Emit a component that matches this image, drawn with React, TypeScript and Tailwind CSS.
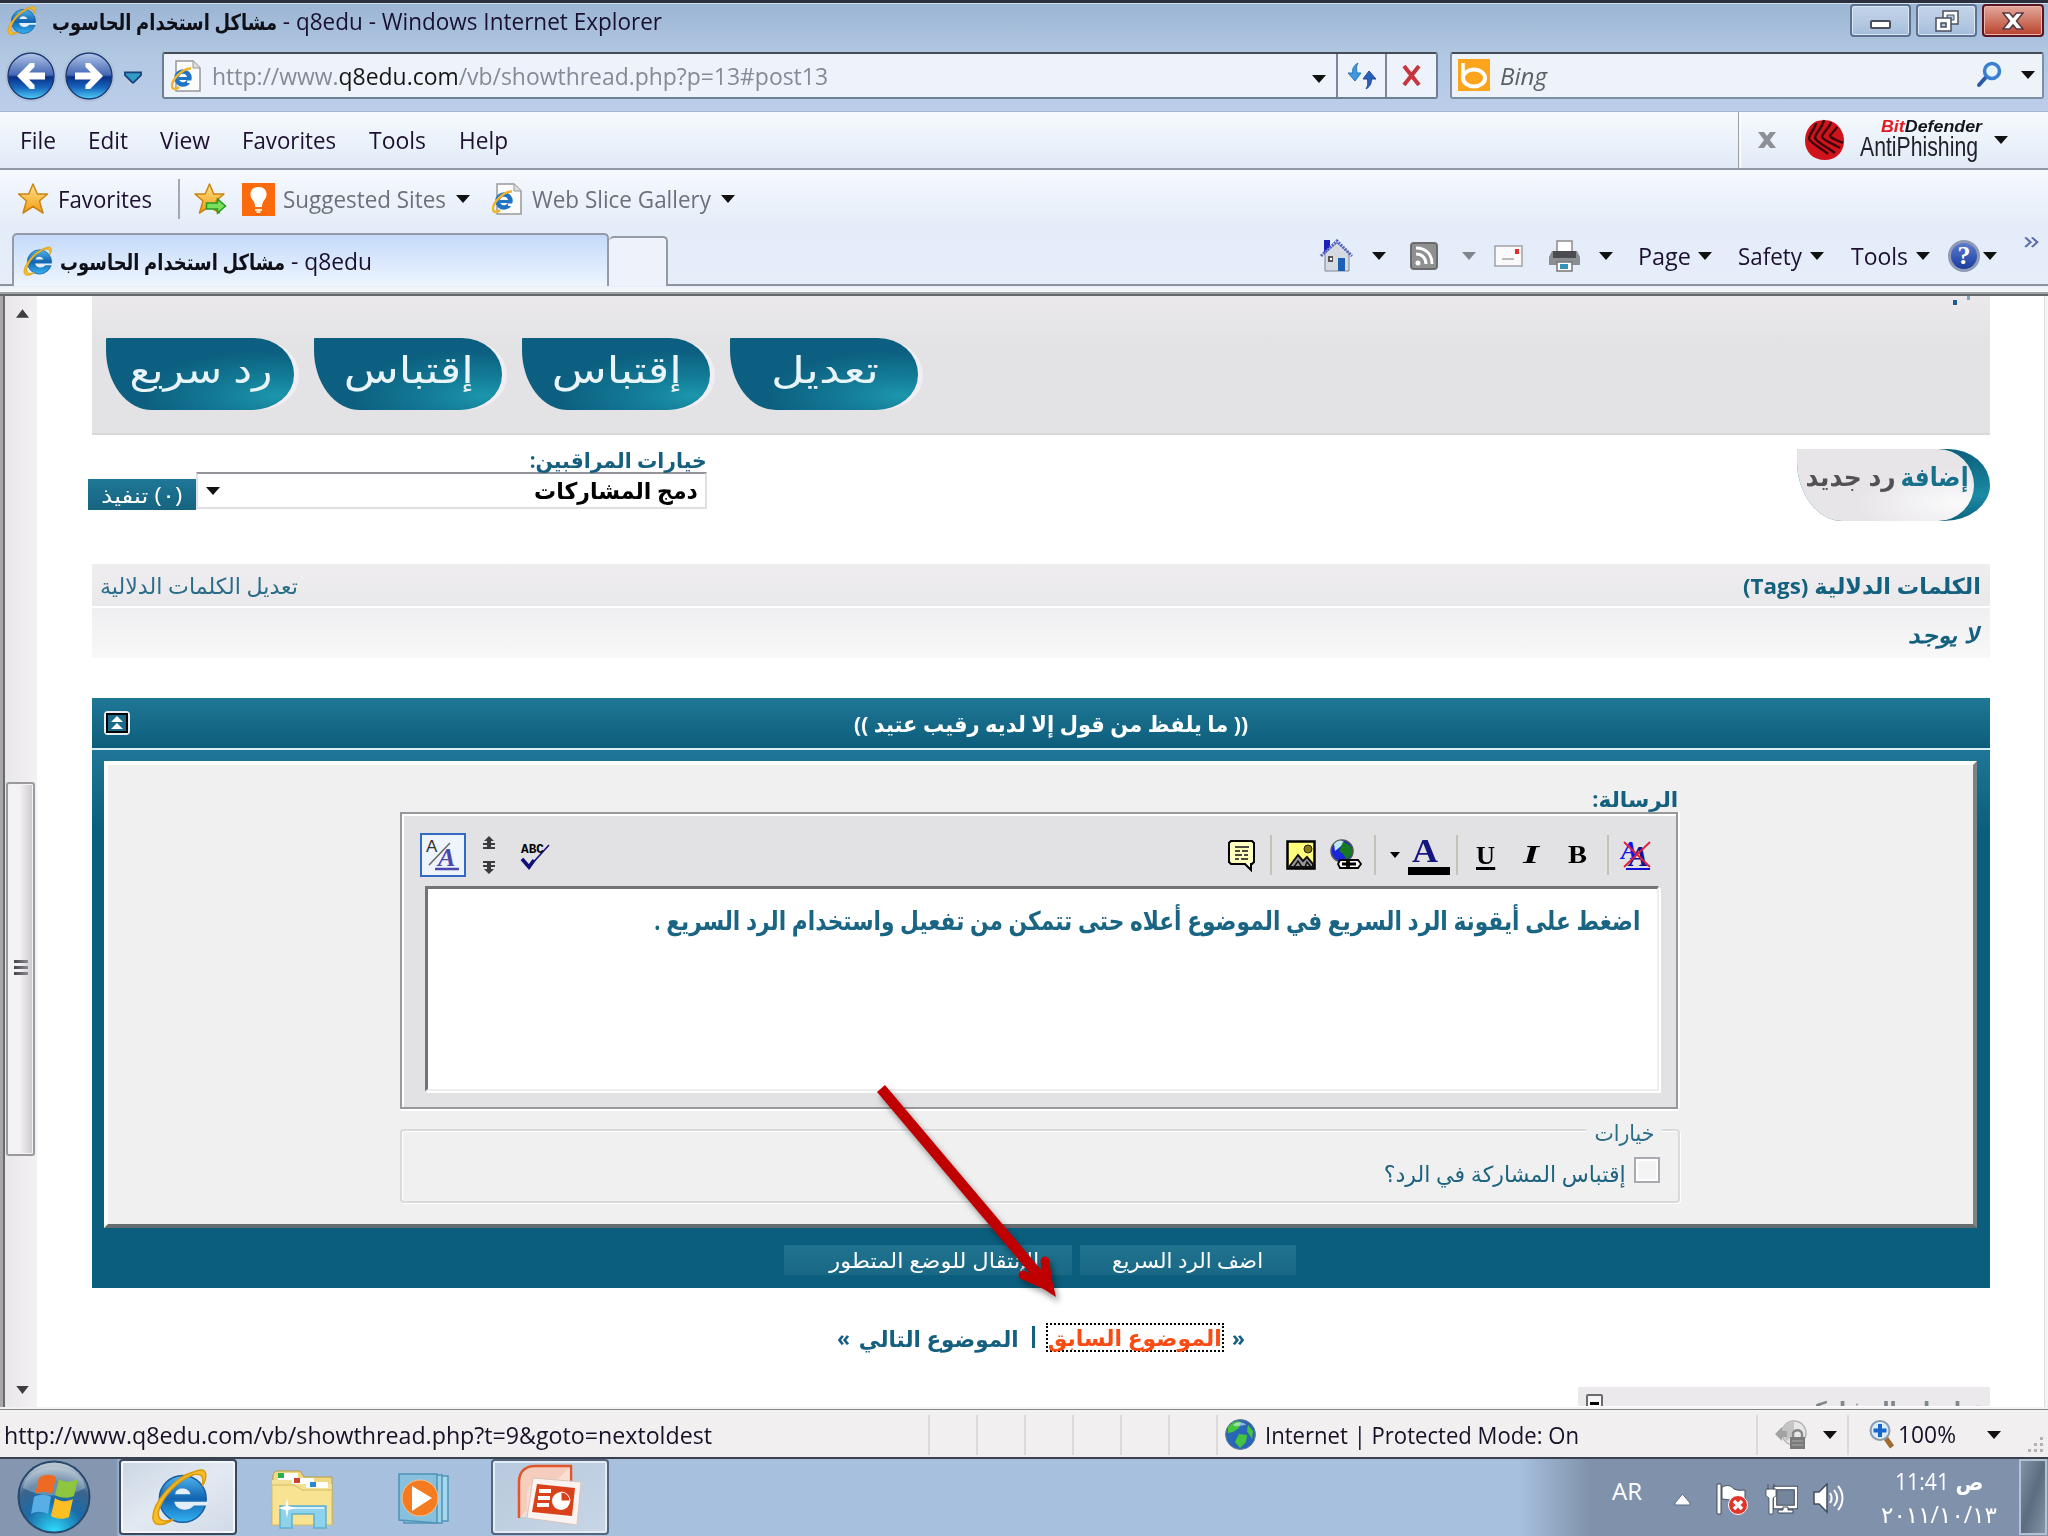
import React, { useLayoutEffect, useRef, useState } from "react";

/* A line of text condensed or widened to the width of its slot. */
function Fit({ w, rtl, className = "", children }: { w: number; rtl?: boolean; className?: string; children: React.ReactNode }) {
  const ref = useRef<HTMLSpanElement>(null);
  const [s, setS] = useState(1);
  useLayoutEffect(() => {
    if (ref.current) setS(w / ref.current.getBoundingClientRect().width * s);
  }, [w]);
  return (
    <div dir={rtl ? "rtl" : "ltr"} className={"shrink-0 whitespace-nowrap " + className} style={{ width: w }}>
      <span ref={ref} className={"inline-block " + (rtl ? "origin-right" : "origin-left")} style={{ transform: `scaleX(${s})` }}>
        {children}
      </span>
    </div>
  );
}

function Caret({ className = "", color = "#111" }: { className?: string; color?: string }) {
  return (
    <svg className={"h-[8px] w-[14px] shrink-0 " + className} viewBox="0 0 14 8">
      <path d="M0 0H14L7 8Z" fill={color} />
    </svg>
  );
}

function IeLogo({ className = "" }: { className?: string }) {
  return (
    <svg className={"shrink-0 " + className} viewBox="0 0 32 32">
      <defs>
        <linearGradient id="ieBlue" x1="0" y1="0" x2="0" y2="1">
          <stop offset="0" stopColor="#4fb4ee" />
          <stop offset=".5" stopColor="#1264b0" />
          <stop offset="1" stopColor="#33b4f2" />
        </linearGradient>
      </defs>
      <circle cx="18" cy="17" r="12.5" fill="url(#ieBlue)" stroke="#1b5c9e" strokeWidth=".8" />
      <path d="M14 14.500C14 10.500 21.500 10.500 22 14.500Z" fill="#e3eefa" />
      <path d="M13.500 18.500H31V20.500H24C21 24 14.500 23.500 13.500 18.500Z" fill="#e3eefa" />
      <path d="M24 2.500C32-1 31 6 28.500 10C29 6 29 3 24 4C15 7 7 16 5 24C4.500 28 7 30 13 28C9 30.500 2.500 33 2 27C2 19 14 5 24 2.500Z" fill="#f5be2a" stroke="#dc9a10" strokeWidth=".8" />
    </svg>
  );
}

function PageIcon({ className = "" }: { className?: string }) {
  return (
    <svg className={"shrink-0 " + className} viewBox="0 0 30 32">
      <path d="M5 1H22L29 8V31H5Z" fill="#fbfbfb" stroke="#999" strokeWidth="1.500" />
      <path d="M22 1V8H29" fill="#ddd" stroke="#999" />
      <circle cx="12" cy="18" r="6.500" fill="none" stroke="#1f74c4" strokeWidth="4.500" />
      <path d="M8 18.500H18" stroke="#1f74c4" strokeWidth="3" />
      <path d="M16 20.500h6v2.500h-6z" fill="#fbfbfb" />
      <path d="M20 8.500C12 8 0 20 1 27C3 31 7 28 8 27" fill="none" stroke="#efb42c" strokeWidth="2.500" />
    </svg>
  );
}

const starPath = "M15 1L19.300 11H29.500L21.500 18L25 30L15 23.500L5 30L8.500 18L.5 11H10.700Z";

function Star({ add, className = "" }: { add?: boolean; className?: string }) {
  return (
    <svg className={"shrink-0 " + className} viewBox="0 0 32 32">
      <defs>
        <linearGradient id="gold" x1="0" y1="0" x2="0" y2="1">
          <stop offset="0" stopColor="#ffe38a" />
          <stop offset="1" stopColor="#f59a11" />
        </linearGradient>
      </defs>
      <path d={starPath} fill="url(#gold)" stroke="#c98514" strokeWidth="1.500" strokeLinejoin="round" />
      {add && <path d="M12 20H23V16L31 23L23 30V26H12Z" fill="#7ae05a" stroke="#249a24" strokeWidth="1.500" />}
    </svg>
  );
}

function NavCircle({ back }: { back?: boolean }) {
  return (
    <svg className="h-[52px] w-[52px] shrink-0" viewBox="0 0 52 52">
      <defs>
        <linearGradient id="navTop" x1="0" y1="0" x2="0" y2="1">
          <stop offset="0" stopColor="#b4c8ea" />
          <stop offset=".48" stopColor="#4466b2" />
          <stop offset=".52" stopColor="#0b2f86" />
          <stop offset=".75" stopColor="#1765bd" />
          <stop offset="1" stopColor="#4fd0f8" />
        </linearGradient>
      </defs>
      <circle cx="26" cy="26" r="25" fill="#c4d4e6" stroke="#a9bcd2" />
      <circle cx="26" cy="26" r="23" fill="url(#navTop)" stroke="#1e3c78" strokeWidth="1.500" />
      <g transform={back ? "" : "translate(52 0) scale(-1 1)"}>
        <path d="M12 26L25 13H29.500V17L24 22.500H40V29.500H24L29.500 35V39H25Z" fill="#fff" />
      </g>
    </svg>
  );
}

function Pill({ w, text, ml }: { w: number; text: string; ml: string }) {
  return (
    <div className={"flex h-[72px] w-[188px] shrink-0 justify-center rounded-[1px_40px_42px_46px/1px_36px_35px_60px] bg-[radial-gradient(ellipse_at_90%_80%,#1c96ac_0%,#137a95_25%,#0c5f80_55%)] pt-[8px] pl-[2px] shadow-[6px_1px_0_-1px_#f1edf3] " + ml}>
      <Fit w={w} rtl className="text-[37px] leading-[46px] text-[#e8f4f8]">{text}</Fit>
    </div>
  );
}

function TitleBar() {
  return (
    <div className="flex h-[112px] shrink-0 flex-col border-b border-[#a4b6d2] bg-gradient-to-b from-[#9ab4d3] via-[#b1c8e2] to-[#bccdea]">
      <div className="h-[4px] shrink-0 border-b border-[#d3e0ee] bg-[#2b2e3c]" />
      <div className="flex h-[40px] shrink-0">
        <IeLogo className="mt-px ml-[6px] h-[31px] w-[31px]" />
        <Fit w={225} className="mt-0 ml-[15px] text-[22px] leading-[34px] font-bold text-[#101018]">‏مشاكل استخدام الحاسوب‏</Fit>
        <Fit w={385} className="ml-0 text-[23px] leading-[34px] text-[#1a1030]">&nbsp;- q8edu - Windows Internet Explorer</Fit>
        <div className="mt-0 ml-[1188px] flex gap-[5px]">
          <div className="flex h-[33px] w-[61px] items-center justify-center rounded-[4px] border-2 border-[#5c7190] bg-gradient-to-b from-[#c3d4e9] via-[#b7cae2] via-50% to-[#a4bedd] shadow-[inset_0_0_0_1px_#dce7f4]">
            <div className="mt-[8px] h-[9px] w-[21px] rounded-[2px] border-2 border-[#4a4f60] bg-white" />
          </div>
          <div className="flex h-[33px] w-[61px] items-center justify-center rounded-[4px] border-2 border-[#5c7190] bg-gradient-to-b from-[#c3d4e9] via-[#b7cae2] via-50% to-[#a4bedd] shadow-[inset_0_0_0_1px_#dce7f4]">
            <svg className="h-[22px] w-[24px]" viewBox="0 0 24 22">
              <path d="M8 1H23V14H8Z" fill="#fff" stroke="#4a4f60" strokeWidth="1.500" />
              <path d="M12 5H19V10H12Z" fill="#b7cae2" stroke="#4a4f60" />
              <path d="M1 8H16V21H1Z" fill="#fff" stroke="#4a4f60" strokeWidth="1.500" />
              <path d="M6 13H11V17H6Z" fill="#b7cae2" stroke="#4a4f60" strokeWidth="1.500" />
            </svg>
          </div>
          <div className="flex h-[33px] w-[62px] items-center justify-center rounded-[4px] border-2 border-[#5c1520] bg-gradient-to-b from-[#e4a89c] via-[#cf7866] via-48% to-[#b8402c] shadow-[inset_0_0_0_1px_#e9b8ae]">
            <svg className="h-[18px] w-[22px]" viewBox="0 0 22 18">
              <path d="M1 1H7.500L11 5L14.500 1H21L14.500 9L21 17H14.500L11 13L7.500 17H1L7.500 9Z" fill="#fff" stroke="#553846" strokeWidth="1.500" />
            </svg>
          </div>
        </div>
      </div>
      <div className="flex h-[64px] shrink-0">
        <div className="mt-[6px] ml-[5px] flex gap-[6px]">
          <NavCircle back />
          <NavCircle />
        </div>
        <svg className="mt-[27px] ml-[9px] h-[13px] w-[18px] shrink-0" viewBox="0 0 19 13">
          <path d="M1 1H18V4L10 12H9L1 4Z" fill="#2f9cc8" stroke="#1d3f78" strokeWidth="1.800" />
        </svg>
        <div className="mt-[8px] ml-[20px] flex h-[47px] w-[1276px] shrink-0 rounded-[3px] border-2 border-[#6e7f93] border-t-[#454b57] bg-[#eef2fa]">
          <PageIcon className="mt-[6px] ml-[7px] h-[32px] w-[30px]" />
          <Fit w={616} className="ml-[11px] text-[24px] leading-[44px] text-[#858b94]">http://www.<span className="text-[#161616]">q8edu.com</span>/vb/showthread.php?p=13#post13</Fit>
          <Caret className="mt-[21px] ml-[484px]" />
          <div className="ml-[10px] flex w-[51px] items-center justify-center border-x-2 border-[#7c8898] pl-[2px]">
            <svg className="h-[28px] w-[30px]" viewBox="0 0 30 28">
              <path d="M11 1C6 4 5.500 7 5.500 11H1L8 19L14 11H10C9.500 7 9 4 11 1Z" fill="#3b9ae0" stroke="#2f74b8" />
              <path d="M19 27C24 24 24.500 20 24.500 17H29L22 9L16 17H20.500C21 21 21 24 19 27Z" fill="#2b60ba" stroke="#1d4a98" />
            </svg>
          </div>
          <div className="flex w-[50px] items-center justify-center">
            <svg className="h-[21px] w-[21px]" viewBox="0 0 21 21">
              <path d="M3 1L18 20M18 1L3 20" stroke="#c9353c" strokeWidth="4" />
            </svg>
          </div>
        </div>
        <div className="mt-[8px] ml-[12px] flex h-[47px] w-[594px] shrink-0 rounded-[3px] border-2 border-[#7e8fa4] border-t-[#454b57] bg-[#edf3f9]">
          <svg className="mt-[5px] ml-[6px] h-[32px] w-[32px] shrink-0" viewBox="0 0 32 32">
            <path d="M0 0H32V32H0Z" fill="#fca51c" />
            <path d="M5 4V20" stroke="#fff" strokeWidth="3.500" />
            <ellipse cx="16" cy="19" rx="11" ry="8.500" fill="none" stroke="#fff" strokeWidth="4" />
          </svg>
          <Fit w={47} className="ml-[10px] text-[24px] leading-[44px] text-[#5c6068] italic">Bing</Fit>
          <svg className="mt-[7px] ml-[429px] h-[27px] w-[27px] shrink-0" viewBox="0 0 27 27">
            <path d="M11 15L3 24" stroke="#2a5ca8" strokeWidth="4" strokeLinecap="round" />
            <circle cx="16" cy="10" r="7.500" fill="#e6f4fd" stroke="#3a7fd0" strokeWidth="3.500" />
          </svg>
          <Caret className="mt-[17px] ml-[18px]" />
        </div>
      </div>
    </div>
  );
}

function MenuBar() {
  return (
    <div className="flex h-[58px] shrink-0 items-center border-b-2 border-[#9298a2] bg-gradient-to-b from-[#f6fafe] to-[#e1eaf6] text-[23px] text-[#1d1030]">
      <Fit w={36} className="ml-[20px]">File</Fit>
      <Fit w={40} className="ml-[32px]">Edit</Fit>
      <Fit w={50} className="ml-[32px]">View</Fit>
      <Fit w={94} className="ml-[32px]">Favorites</Fit>
      <Fit w={57} className="ml-[33px]">Tools</Fit>
      <Fit w={49} className="ml-[33px]">Help</Fit>
      <div className="ml-[1230px] h-full w-[3px] shrink-0 border-r border-l border-[#9aa2ae] border-r-white" />
      <svg className="ml-[17px] h-[16px] w-[18px] shrink-0" viewBox="0 0 18 16">
        <path d="M0 0H6L9 4L12 0H18L12 8L18 16H12L9 12L6 16H0L6 8Z" fill="#8c9097" />
      </svg>
      <svg className="ml-[28px] h-[42px] w-[41px] shrink-0" viewBox="0 0 41 42">
        <path d="M20 1C33 1 40 12 40 22C40 34 31 41 21 41C9 41 1 33 1 22C1 12 6 5 13 2Z" fill="#cf141c" />
        <path d="M12 4C11 10 5 15 5 20C8 25 17 29 24 35M20 1C18 10 11 14 11 19C13 24 24 28 31 34M27 3C25 10 18 14 18 18C20 22 30 25 36 29M33 8C31 12 26 15 26 17C28 20 35 22 39 24" fill="none" stroke="#3a0508" strokeWidth="2.400" />
      </svg>
      <div className="ml-[15px] flex w-[122px] shrink-0 flex-col">
        <Fit w={101} className="ml-[21px] font-['Liberation_Sans'] text-[17px] leading-[15px] font-bold italic text-[#15151c]"><span className="text-[#e31b23]">Bit</span>Defender</Fit>
        <Fit w={118} className="font-['Liberation_Sans'] text-[27px] leading-[27px] text-[#22222a]">AntiPhishing</Fit>
      </div>
      <Caret className="ml-[12px]" />
    </div>
  );
}

function FavoritesBar() {
  return (
    <div className="flex h-[58px] shrink-0 items-center text-[23px]">
      <Star className="ml-[18px] h-[32px] w-[32px]" />
      <Fit w={94} className="ml-[8px] text-[#1d1030]">Favorites</Fit>
      <div className="ml-[26px] h-[40px] w-[2px] shrink-0 bg-[#a3a8b2]" />
      <Star add className="ml-[14px] h-[32px] w-[33px]" />
      <svg className="ml-[15px] h-[33px] w-[33px] shrink-0" viewBox="0 0 33 33">
        <path d="M0 0H33V33H0Z" fill="#fb6a0c" />
        <path d="M16.500 4C8 4 7 12 10 16C12 19 13 20 13 24H20C20 20 21 19 23 16C26 12 25 4 16.500 4Z" fill="#fff" />
        <path d="M13 26H20V28H18.500V30H14.500V28H13Z" fill="#ffe3c8" />
      </svg>
      <Fit w={163} className="ml-[8px] text-[#6d7078]">Suggested Sites</Fit>
      <Caret className="ml-[10px]" />
      <PageIcon className="ml-[22px] h-[32px] w-[30px]" />
      <Fit w={179} className="ml-[10px] text-[#6d7078]">Web Slice Gallery</Fit>
      <Caret className="ml-[10px]" />
    </div>
  );
}

function TabBar() {
  return (
    <div className="flex h-[58px] shrink-0 border-b-2 border-[#8e949e]">
      <div className="mt-[5px] ml-[12px] flex h-[53px] w-[597px] shrink-0 items-center rounded-t-[5px] border-2 border-b-0 border-[#959aa4] bg-gradient-to-b from-[#c4dafa] to-[#eef5fe]">
        <IeLogo className="ml-[8px] h-[32px] w-[31px]" />
        <Fit w={225} className="ml-[7px] text-[22px] leading-[34px] font-bold text-[#101018]">‏مشاكل استخدام الحاسوب‏</Fit>
        <Fit w={87} className="text-[23px] leading-[34px] text-[#1a1030]">&nbsp;- q8edu</Fit>
      </div>
      <div className="mt-[8px] h-[50px] w-[59px] shrink-0 rounded-t-[5px] border-2 border-b-0 border-l-0 border-[#959aa4] bg-[#eef3fb]" />
      <div className="flex flex-1 items-center text-[23px] text-[#1d1030]">
        <svg className="ml-[651px] h-[34px] w-[34px] shrink-0" viewBox="0 0 34 34">
          <path d="M6 14L18 4L30 14V32H6Z" fill="#d5dae2" stroke="#7d8694" />
          <path d="M5 1H11V8L5 14Z" fill="#1a22b8" />
          <path d="M2 17L18 2L33 17" fill="none" stroke="#5563c4" strokeWidth="3" strokeDasharray="2 1" />
          <path d="M19 19H26V32H19Z" fill="#1d5fb5" />
          <path d="M9 17H14V23H9Z" fill="#555" />
          <path d="M11 19h2v2h-2z" fill="#fff" />
        </svg>
        <Caret className="ml-[19px]" />
        <svg className="ml-[24px] h-[28px] w-[28px] shrink-0" viewBox="0 0 28 28">
          <rect x="1" y="1" width="26" height="26" rx="3" fill="#909090" stroke="#6c6c6c" strokeWidth="2" />
          <circle cx="8" cy="21" r="2.500" fill="#fff" />
          <path d="M6 12C12 12 16 16 16 22M6 6C16 6 22 12 22 22" fill="none" stroke="#fff" strokeWidth="3" />
        </svg>
        <Caret className="ml-[24px]" color="#80868e" />
        <svg className="ml-[18px] h-[22px] w-[29px] shrink-0" viewBox="0 0 29 22">
          <path d="M1 1H28V21H1Z" fill="#fafafa" stroke="#a2a2a6" strokeWidth="1.500" />
          <path d="M21 4H25V9H21Z" fill="#e0322c" />
          <path d="M8 14H20" stroke="#bbb" strokeWidth="2" />
        </svg>
        <svg className="ml-[25px] h-[32px] w-[33px] shrink-0" viewBox="0 0 33 32">
          <path d="M9 1H24V13H9Z" fill="#fff" stroke="#8c8c8c" strokeWidth="1.500" />
          <path d="M1 17L4 11H29L32 17V25H1Z" fill="#8b8e92" />
          <path d="M5 11H28V18H5Z" fill="#4a4c50" />
          <path d="M9 22H24V31H9Z" fill="#fff" stroke="#777" strokeWidth="1.500" />
          <path d="M12 24H20V29H12Z" fill="#3292b8" />
        </svg>
        <Caret className="ml-[18px]" />
        <Fit w={53} className="ml-[25px]">Page</Fit>
        <Caret className="ml-[7px]" />
        <Fit w={64} className="ml-[26px]">Safety</Fit>
        <Caret className="ml-[8px]" />
        <Fit w={57} className="ml-[27px]">Tools</Fit>
        <Caret className="ml-[8px]" />
        <div className="ml-[18px] flex h-[32px] w-[32px] shrink-0 items-center justify-center rounded-full border-[3px] border-[#8f9bb4] bg-gradient-to-b from-[#5c7ad0] to-[#1b3b9d] font-['Liberation_Serif'] text-[26px] leading-none font-bold text-white">?</div>
        <Caret className="ml-[3px]" />
        <Fit w={17} className="mb-[34px] ml-[26px] text-[26px] leading-none text-[#5a6cab]">»</Fit>
      </div>
    </div>
  );
}

function ScrollBar() {
  return (
    <div className="flex w-[32px] shrink-0 flex-col items-center bg-gradient-to-r from-[#e9e7ea] to-[#f3f1f4]">
      <svg className="mt-[13px] ml-[2px] h-[9px] w-[13px]" viewBox="0 0 14 9"><path d="M7 0L14 9H0Z" fill="#3d3d42" /></svg>
      <div className="mt-[464px] mr-px flex h-[374px] w-[29px] flex-col items-center justify-center gap-[3px] rounded-[3px] border-2 border-[#9a999d] bg-gradient-to-r from-[#f4f2f5] from-45% to-[#cbc9ce] pb-[4px] shadow-[inset_0_0_0_1px_#f3f2f5]">
        <div className="h-[3px] w-[14px] bg-gradient-to-r from-[#47464b] to-[#8a898e]" />
        <div className="h-[3px] w-[14px] bg-gradient-to-r from-[#47464b] to-[#8a898e]" />
        <div className="h-[3px] w-[14px] bg-gradient-to-r from-[#47464b] to-[#8a898e]" />
      </div>
      <svg className="mt-auto mb-[13px] ml-[2px] h-[8px] w-[13px]" viewBox="0 0 14 9"><path d="M0 0H14L7 9Z" fill="#3d3d42" /></svg>
    </div>
  );
}

function Sep({ ml }: { ml: string }) {
  return <div className={"h-[40px] w-[2px] shrink-0 bg-[#c5c2b8] " + ml} />;
}

function EditorToolbar() {
  return (
    <div className="flex h-[72px] shrink-0 items-center pt-[10px] pl-[2px] font-['Liberation_Serif'] font-bold">
      <div className="ml-[16px] flex h-[44px] w-[46px] shrink-0 items-center border-2 border-[#316ac5] bg-[#eef4fb]">
        <svg className="h-[40px] w-[42px]" viewBox="0 0 42 40">
          <path d="M7 30L28 8" stroke="#666" strokeWidth="1.500" />
          <path d="M13 34H37" stroke="#4a48b0" strokeWidth="2.500" />
          <text x="4" y="17" fontSize="17" fontFamily="Liberation Sans" fontWeight="400" fill="#333">A</text>
          <text x="16" y="31" fontSize="26" fontStyle="italic" fontFamily="Liberation Serif" fill="#4a48b0">A</text>
        </svg>
      </div>
      <svg className="ml-[17px] h-[38px] w-[12px] shrink-0" viewBox="0 0 12 38">
        <path d="M6 0L11 5H8V7H12V9H8V11H12V13H0V11H4V9H0V7H4V5H1ZM6 38L11 33H8V31H12V29H8V27H12V25H0V27H4V29H0V31H4V33H1Z" fill="#3c3c40" />
      </svg>
      <svg className="ml-[25px] h-[32px] w-[30px] shrink-0" viewBox="0 0 30 32">
        <text x="1" y="14" fontSize="13" textLength="23" lengthAdjust="spacingAndGlyphs" fontFamily="Liberation Mono" fill="#000">ABC</text>
        <path d="M2 20L9 28L29 6" fill="none" stroke="#10107a" strokeWidth="1.600" />
        <path d="M2 20L9 28L14 21" fill="none" stroke="#10107a" strokeWidth="3.600" />
      </svg>
      <svg className="ml-[678px] h-[33px] w-[28px] shrink-0" viewBox="0 0 28 33">
        <path d="M3 2H24L26 4V23L24 25H23V31L17 25H3L1 23V4Z" fill="#ffffc0" stroke="#000" strokeWidth="2" />
        <path d="M7 8H21M7 12H12M14 12H20M7 16H14M16 16H20M7 20H11M13 20H20" stroke="#111" strokeWidth="1.600" />
      </svg>
      <Sep ml="ml-[14px]" />
      <svg className="ml-[14px] h-[30px] w-[30px] shrink-0" viewBox="0 0 30 30">
        <path d="M1.500 1.500H28.500V28.500H1.500Z" fill="#ffff7c" stroke="#000" strokeWidth="2.500" />
        <circle cx="22" cy="9" r="4" fill="#8a7a10" stroke="#222" />
        <path d="M3 27L12 15L17 21L21 17L27 24V27Z" fill="#999" stroke="#111" strokeWidth="2" />
        <path d="M8 27L12 21L16 27M19 27L21 22L25 27" fill="none" stroke="#111" strokeWidth="1.500" />
      </svg>
      <svg className="ml-[14px] h-[33px] w-[33px] shrink-0" viewBox="0 0 33 33">
        <circle cx="12" cy="12" r="11" fill="#1a24d8" stroke="#555" strokeWidth="1.500" />
        <path d="M4 5C8 0 14 1 14 4L10 8L5 12Z" fill="#bfe8ee" />
        <path d="M13 3C20 5 23 9 22 15L17 21L13 15L9 12Z" fill="#157a20" />
        <path d="M10 21H19V29H10L8 25ZM17 21H28L31 25L28 29H17Z" fill="#fff" stroke="#000" strokeWidth="1.800" />
        <path d="M12 25H26" stroke="#000" strokeWidth="3" />
      </svg>
      <Sep ml="ml-[11px]" />
      <svg className="ml-[14px] h-[6px] w-[10px] shrink-0" viewBox="0 0 10 6"><path d="M0 0H10L5 6Z" fill="#000" /></svg>
      <div className="ml-[8px] flex w-[42px] shrink-0 flex-col">
        <Fit w={26} className="ml-[4px] text-[33px] leading-[31px] text-[#15157e]">A</Fit>
        <div className="h-[8px] w-[42px] bg-black" />
      </div>
      <Sep ml="ml-[6px]" />
      <Fit w={19} className="mt-[2px] ml-[18px] text-[26px] leading-[26px]"><span className="inline-block border-b-[3px] border-black leading-[22px]">U</span></Fit>
      <Fit w={16} className="ml-[28px] text-[26px] leading-[26px] italic">I</Fit>
      <Fit w={19} className="ml-[29px] text-[26px] leading-[26px]">B</Fit>
      <Sep ml="ml-[20px]" />
      <svg className="ml-[11px] h-[32px] w-[32px] shrink-0 overflow-visible" viewBox="0 0 32 32">
        <text x="1" y="20" fontSize="25" fontStyle="italic" fontFamily="Liberation Serif" fill="#1414f0">A</text>
        <text x="9" y="27" fontSize="29" fontStyle="italic" fontFamily="Liberation Serif" fill="#101098">A</text>
        <path d="M6 30H30" stroke="#1212d0" strokeWidth="2" />
        <path d="M4 3L30 28M30 3L4 28" stroke="#e02038" strokeWidth="1.800" />
      </svg>
    </div>
  );
}

function QuickReply() {
  return (
    <div className="mt-[40px] flex h-[590px] w-[1898px] shrink-0 flex-col bg-[#0b5e7d]">
      <div className="flex h-[50px] shrink-0 items-center bg-gradient-to-b from-[#1f7796] to-[#0c5d7b]">
        <svg className="ml-[12px] h-[24px] w-[26px] shrink-0" viewBox="0 0 26 24">
          <rect x="1" y="1" width="24" height="22" rx="3" fill="#186a88" stroke="#e8eef2" strokeWidth="2" />
          <path d="M3 3H23V21H3Z" fill="none" stroke="#000" strokeWidth="2" />
          <path d="M13 5L19 11H7ZM13 12L19 18H7Z" fill="#fff" />
        </svg>
        <Fit w={394} rtl className="ml-[724px] text-[22px] leading-[30px] font-bold text-white">(( ما يلفظ من قول إلا لديه رقيب عتيد ))</Fit>
      </div>
      <div className="h-[2px] shrink-0 bg-[#d9edf2]" />
      <div className="flex flex-1 flex-col bg-gradient-to-b from-[#1f7696] to-[#0b5e7d] to-[80px] pt-[11px] pl-[12px]">
        <div className="flex h-[467px] w-[1873px] shrink-0 flex-col border-4 border-t-white border-r-[#7d8284] border-b-[#666d70] border-l-white bg-[#f1f0f1] pl-[292px]">
          <Fit w={86} rtl className="mt-[24px] ml-[1192px] h-[22px] text-[21px] leading-[20px] font-bold text-[#14607f]">الرسالة:</Fit>
          <div className="mt-px flex h-[297px] w-[1278px] shrink-0 flex-col border-2 border-[#98989c] bg-[#e2e1e3] shadow-[inset_2px_2px_0_#fff,0_2px_0_#fff,2px_0_0_#fff]">
            <EditorToolbar />
            <div className="ml-[23px] h-[205px] w-[1234px] border-t-[3px] border-r-2 border-b-2 border-l-[3px] border-t-[#737377] border-r-[#efeeef] border-b-[#efeeef] border-l-[#737377] bg-white pt-[12px] pl-[226px] shadow-[2px_2px_0_#fff]">
              <Fit w={986} rtl className="text-[26px] leading-[38px] font-bold text-[#1a6583]">اضغط على أيقونة الرد السريع في الموضوع أعلاه حتى تتمكن من تفعيل واستخدام الرد السريع .</Fit>
            </div>
          </div>
          <div className="relative mt-[20px] flex h-[74px] w-[1280px] shrink-0 items-center rounded-[4px] border-2 border-[#d8dadb] shadow-[inset_1px_1px_0_#fff,1px_1px_0_#fff]">
            <div className="absolute -top-[13px] left-[1184px] bg-[#f1f0f1] px-[8px]">
              <Fit w={60} rtl className="text-[22px] leading-[28px] text-[#2a6d88]">خيارات</Fit>
            </div>
            <Fit w={242} rtl className="mt-[14px] ml-[982px] text-[22px] leading-[28px] text-[#1c6380]">إقتباس المشاركة في الرد؟</Fit>
            <div className="mt-[8px] ml-[8px] h-[26px] w-[26px] border-2 border-[#a8aab0] bg-[#f4f4f5] shadow-[inset_0_0_0_2px_#fff]" />
          </div>
        </div>
        <div className="mt-[17px] flex gap-[8px] pl-[680px] text-[21px] leading-[30px] text-white">
          <div className="flex h-[30px] w-[288px] items-center bg-gradient-to-b from-[#20738f] to-[#196885]">
            <Fit w={210} rtl className="ml-[45px]">الإنتقال للوضع المتطور</Fit>
          </div>
          <div className="flex h-[30px] w-[216px] items-center bg-gradient-to-b from-[#20738f] to-[#196885]">
            <Fit w={151} rtl className="ml-[32px]">اضف الرد السريع</Fit>
          </div>
        </div>
      </div>
    </div>
  );
}

function ForumPage() {
  return (
    <div className="flex h-[1111px] flex-1 flex-col overflow-hidden bg-white pl-[55px]">
      <div className="flex h-[139px] w-[1898px] shrink-0 border-b-2 border-[#d8d7d9] bg-gradient-to-b from-[#ebe9ec] to-[#e3e2e4] to-35%">
        <Pill ml="mt-[42px] ml-[14px]" w={143} text="رد سريع" />
        <Pill ml="mt-[42px] ml-[20px]" w={130} text="إقتباس" />
        <Pill ml="mt-[42px] ml-[20px]" w={130} text="إقتباس" />
        <Pill ml="mt-[42px] ml-[20px]" w={108} text="تعديل" />
        <div className="mt-[4px] ml-[1035px] h-[5px] w-[4px] bg-[#1a5e90]" />
        <div className="ml-[10px] h-[4px] w-[3px] bg-[#7fa6bd]" />
      </div>
      <div className="flex h-[129px] shrink-0">
        <div className="mt-[44px] -ml-[4px] flex h-[31px] w-[108px] shrink-0 items-center justify-center bg-gradient-to-b from-[#1f7797] to-[#166480]">
          <Fit w={81} rtl className="text-[21px] leading-[26px] text-white">(٠) تنفيذ</Fit>
        </div>
        <div className="mt-[13px] flex w-[512px] shrink-0 flex-col">
          <Fit w={177} rtl className="ml-[334px] h-[24px] text-[21px] leading-[24px] font-bold text-[#155f7f]">خيارات المراقبين:</Fit>
          <div className="flex h-[37px] w-[511px] items-center border-2 border-t-[#93939a] border-r-[#e0e0e4] border-b-[#e0e0e4] border-l-[#e0e0e4] bg-white">
            <Caret className="ml-[8px]" />
            <Fit w={164} rtl className="ml-[314px] text-[23px] leading-[33px] font-bold text-black">دمج المشاركات</Fit>
          </div>
        </div>
        <div className="mt-[14px] ml-[1089px] flex h-[72px] w-[193px] shrink-0 overflow-hidden rounded-[1px_42px_46px_46px/1px_36px_36px_60px] bg-gradient-to-b from-[#0c5f7d] via-[#1b8ba5] via-65% to-[#0c6480]">
          <div className="flex h-[72px] w-[177px] shrink-0 items-start rounded-r-[38px] bg-[radial-gradient(ellipse_at_90%_75%,#fbfafb,#e7e5e8_45%)] pt-[11px] pl-[9px] text-[26px] leading-[32px] font-bold">
            <Fit w={90} rtl className="text-[#535056]">رد جديد</Fit>
            <Fit w={68} rtl className="ml-[5px] text-[#17708c]">إضافة</Fit>
          </div>
        </div>
      </div>
      <div className="flex h-[42px] w-[1898px] shrink-0 items-center bg-gradient-to-b from-[#efedf0] to-[#e9e8ea]">
        <Fit w={198} rtl className="ml-[8px] text-[22px] leading-[30px] text-[#2a6d88]">تعديل الكلمات الدلالية</Fit>
        <Fit w={238} rtl className="ml-[1445px] text-[22px] leading-[30px] font-bold text-[#14607f]">الكلمات الدلالية (Tags)</Fit>
      </div>
      <div className="mt-[2px] flex h-[50px] w-[1898px] shrink-0 items-center bg-gradient-to-b from-[#efeef0] to-[#f9f8f9]">
        <Fit w={71} rtl className="mt-px ml-[1816px] text-[22px] leading-[30px] font-bold italic text-[#14607f]">لا يوجد</Fit>
      </div>
      <QuickReply />
      <div className="mt-[34px] flex h-[30px] shrink-0 items-center pl-[745px] text-[22px] leading-[26px] font-bold text-[#155f7f]">
        <Fit w={13}>«</Fit>
        <Fit w={160} rtl className="mt-px ml-[9px]">الموضوع التالي</Fit>
        <div className="ml-[13px] h-[22px] w-[3px] shrink-0 bg-[#155f7f]" />
        <div className="ml-[11px] flex h-[29px] w-[178px] shrink-0 items-center border-2 border-dotted border-black">
          <Fit w={174} rtl className="leading-[26px] text-[#f94b12] underline">الموضوع السابق</Fit>
        </div>
        <Fit w={13} className="ml-[8px]">»</Fit>
      </div>
      <div className="mt-[35px] ml-[1486px] flex h-[19px] w-[412px] shrink-0 overflow-hidden bg-[#ebe9ec]">
        <div className="mt-[7px] ml-[8px] h-[24px] w-[17px] shrink-0 rounded-[2px] border-2 border-[#6a6a70] bg-[#f5f5f6] pt-[6px] pl-[2px]">
          <div className="h-[3px] w-[9px] bg-black" />
        </div>
        <Fit w={179} rtl className="mt-[6px] ml-[199px] h-[30px] text-[20px] leading-[32px] font-bold text-[#7f868c]">تعليمات المشاركة</Fit>
      </div>
    </div>
  );
}

function StatusBar() {
  return (
    <div className="flex h-[45px] shrink-0 items-center bg-[#f1efef] text-[23px] text-[#1a1028]">
      <Fit w={708} className="mt-px ml-[4px]">http://www.q8edu.com/vb/showthread.php?t=9&amp;goto=nextoldest</Fit>
      <div className="ml-[216px] flex h-[40px] w-[290px] shrink-0 border-l-2 border-[#dcdadb]">
        {[0, 1, 2, 3, 4, 5].map((i) => (
          <div key={i} className="h-full w-[48px] shrink-0 border-r-2 border-[#dcdadb]" />
        ))}
      </div>
      <svg className="ml-[7px] h-[31px] w-[31px] shrink-0" viewBox="0 0 31 31">
        <circle cx="15.500" cy="15.500" r="15" fill="#2a66b8" stroke="#6a8090" />
        <path d="M3 8C7 3 12 1 16 3L14 9L8 13L3 14ZM14 15L22 16L21 23L15 29L10 23ZM23 6L28 12L27 20L22 12Z" fill="#44c43c" />
        <path d="M8 6C12 2 19 3 21 6C15 6 12 9 8 6Z" fill="#d8ecf8" opacity=".6" />
      </svg>
      <Fit w={314} className="mt-px ml-[9px]">Internet | Protected Mode: On</Fit>
      <div className="ml-[177px] h-[40px] w-[2px] shrink-0 bg-[#dcdadb]" />
      <svg className="ml-[17px] h-[31px] w-[33px] shrink-0" viewBox="0 0 33 31">
        <circle cx="19" cy="14" r="12" fill="#e8e8e8" stroke="#b4b4b4" strokeWidth="1.500" />
        <path d="M19 3V14L12 22A12 12 0 0 1 12 4Z" fill="#c4c4c4" />
        <path d="M0 15L7 8V12H12V18H7V22Z" fill="#a2a2a2" />
        <path d="M18 18V15C18 10 27 10 27 15V18" fill="none" stroke="#888" strokeWidth="2.500" />
        <path d="M15 18H30V30H15Z" fill="#7a7a7a" />
        <path d="M17 22H28M17 26H28" stroke="#aaa" />
      </svg>
      <Caret className="ml-[15px]" />
      <div className="ml-[10px] h-[40px] w-[2px] shrink-0 bg-[#dcdadb]" />
      <svg className="ml-[20px] h-[30px] w-[27px] shrink-0" viewBox="0 0 27 30">
        <path d="M16 17L23 27" stroke="#a06a30" strokeWidth="5" />
        <circle cx="11" cy="10.500" r="9.500" fill="#d9ecf9" stroke="#8b9cae" strokeWidth="2" />
        <path d="M11 4V17M4.500 10.500H17.500" stroke="#1b66cc" strokeWidth="4" />
      </svg>
      <Fit w={58} className="ml-[2px]">100%</Fit>
      <Caret className="ml-[31px]" />
      <svg className="mt-[22px] ml-[27px] h-[17px] w-[17px] shrink-0" viewBox="0 0 17 17">
        <path d="M12 0h3v3h-3zM12 6h3v3h-3zM12 12h3v3h-3zM6 6h3v3h-3zM6 12h3v3h-3zM0 12h3v3h-3z" fill="#b4b2b4" />
      </svg>
    </div>
  );
}

function TaskBar() {
  return (
    <div className="flex h-[79px] shrink-0 border-t-2 border-[#39414f] bg-[linear-gradient(90deg,#8496b0_0,#8496b0_116px,#a6c0de_120px,#a6c0de_1520px,#8092ab_1590px)]">
      <svg className="mt-px ml-[17px] h-[74px] w-[74px] shrink-0" viewBox="0 0 74 74">
        <defs>
          <radialGradient id="orb" cx=".5" cy="1" r=".95">
            <stop offset="0" stopColor="#2fe0ff" />
            <stop offset=".45" stopColor="#1b6ba8" />
            <stop offset=".75" stopColor="#3c648c" />
            <stop offset="1" stopColor="#b8c4d0" />
          </radialGradient>
        </defs>
        <circle cx="37" cy="37" r="35.500" fill="url(#orb)" stroke="#26496c" strokeWidth="2" />
        <path d="M6 28C10 0 64 0 68 28C50 38 24 38 6 28Z" fill="#e6edf2" opacity=".3" />
        <path d="M22 18C27 14 34 14 39 17L35 34C29 31 23 31 18 34Z" fill="#ee6a22" />
        <path d="M42 19C48 23 55 22 61 19L57 36C51 39 43 38 38 35Z" fill="#8fc63f" />
        <path d="M17 37C22 34 29 34 34 37L31 54C25 51 19 51 14 54Z" fill="#58aee6" />
        <path d="M38 38C43 42 50 42 56 39L52 57C46 60 39 59 34 56Z" fill="#fbbf24" />
      </svg>
      <div className="mt-0 ml-[28px] flex h-[76px] w-[118px] shrink-0 items-center justify-center rounded-[4px] border-2 border-[#3c4858] bg-gradient-to-br from-[#cbd6e4] via-[#e2e9f1] to-[#d0dae7] shadow-[inset_0_0_0_2px_#f2f6fa]">
        <IeLogo className="ml-[2px] h-[60px] w-[62px]" />
      </div>
      <svg className="mt-[11px] ml-[33px] h-[60px] w-[65px] shrink-0" viewBox="0 0 65 60">
        <path d="M3 4L6 1H30L34 7H62V54H2Z" fill="#efd983" stroke="#b99c45" />
        <path d="M8 3H28V10H8Z" fill="#fff" /><path d="M8 3h6v5h-6z" fill="#28b04a" />
        <path d="M2 10H24L30 14H62V20H2Z" fill="#f4e094" />
        <path d="M22 8H44V14H22Z" fill="#fff" /><path d="M24 8h6v5h-6z" fill="#c8442c" />
        <path d="M36 12H58V18H36Z" fill="#fff" /><path d="M40 12h6v5h-6z" fill="#2f86d0" />
        <path d="M2 15H24L32 20H62V55H2Z" fill="#f7e392" stroke="#d7bb60" />
        <path d="M10 36H56V58H44V44H22V58H10Z" fill="#8fd2ec" stroke="#5fb0d0" strokeWidth="1.500" />
        <path d="M12 38H54" stroke="#d7f2fa" strokeWidth="2" />
        <path d="M17 28L18.500 36L26 38L18.500 40L17 48L15.500 40L8 38L15.500 36Z" fill="#fff" />
      </svg>
      <svg className="mt-[14px] ml-[63px] h-[54px] w-[58px] shrink-0" viewBox="0 0 58 54">
        <path d="M10 3H50V48H10Z" fill="#a5d8ec" stroke="#4f93b6" strokeWidth="1.500" />
        <path d="M6 2H44V50H6Z" fill="#9ad1e8" stroke="#4f93b6" strokeWidth="1.500" />
        <path d="M1 1H39V50L1 47Z" fill="#86c0dc" stroke="#4f93b6" strokeWidth="1.500" />
        <circle cx="22" cy="25" r="18" fill="#f47b20" stroke="#fbc08c" />
        <path d="M14 13L34 25L14 38Z" fill="#fff" />
      </svg>
      <div className="ml-[35px] flex h-[76px] w-[118px] shrink-0 justify-center rounded-[4px] border-2 border-[#55657c] bg-gradient-to-br from-[#b7c9de] to-[#c8d6e6] pt-[3px] pr-[2px] shadow-[inset_0_0_0_2px_#e3ebf4]">
        <svg className="h-[62px] w-[64px]" viewBox="0 0 64 62">
          <path d="M2 54V18C2 6 10 2 18 2H54V20" fill="#f4cdbd" stroke="#e0552b" strokeWidth="2.500" />
          <path d="M3 53H10V30C10 20 20 16 53 18V3" fill="#fbe6de" opacity=".7" />
          <path d="M16 14L64 18L60 61L10 54Z" fill="#fbf3ef" stroke="#d9c4bc" />
          <path d="M20 20L58 24L55 52L15 48Z" fill="#d9411b" />
          <path d="M22 27H34M21 34H33M20 41H32" stroke="#fff" strokeWidth="4" />
          <circle cx="44" cy="37" r="9" fill="#fff" />
          <path d="M44 37V28A9 9 0 0 1 53 37Z" fill="#d9411b" stroke="#fff" />
        </svg>
      </div>
      <Fit w={30} className="mt-[14px] ml-[1003px] text-[24px] leading-[36px] text-white">AR</Fit>
      <svg className="mt-[35px] ml-[32px] h-[12px] w-[17px] shrink-0" viewBox="0 0 17 12"><path d="M8.500 0L16 9V11H1V9Z" fill="#fff" stroke="#5b6a80" /></svg>
      <svg className="mt-[24px] ml-[25px] h-[32px] w-[33px] shrink-0" viewBox="0 0 33 32">
        <path d="M1 1H5V31H1Z" fill="#fff" stroke="#444d5a" />
        <path d="M6 4C12 1 15 3 18 6C22 8 26 7 29 7V19C22 20 18 17 6 16Z" fill="#fff" stroke="#444d5a" />
        <circle cx="22" cy="22" r="9.500" fill="#e0352b" stroke="#fff" />
        <path d="M18 18L26 26M26 18L18 26" stroke="#fff" strokeWidth="3.500" />
      </svg>
      <svg className="mt-[24px] ml-[16px] h-[32px] w-[33px] shrink-0" viewBox="0 0 33 32">
        <path d="M10 5H31V24H10Z" fill="#75859b" stroke="#3f4856" strokeWidth="4.500" />
        <path d="M10 5H31V24H10Z" fill="none" stroke="#fff" strokeWidth="2.400" />
        <path d="M13 30H28V27H23V24H18V27H13Z" fill="#fff" stroke="#3f4856" />
        <path d="M3 1V7M9 1V7M1 6H11V13L8 15V31H4V15L1 13Z" fill="#fff" stroke="#3f4856" strokeWidth=".8" />
      </svg>
      <svg className="mt-[23px] ml-[14px] h-[32px] w-[33px] shrink-0" viewBox="0 0 33 32">
        <path d="M2 10H7L15 2V30L7 22H2Z" fill="#fff" stroke="#444d5a" strokeWidth="1.500" />
        <path d="M18 11C20 14 20 18 18 21M22 8C26 13 26 19 22 24M26 4C32 11 32 21 26 28" fill="none" stroke="#fff" strokeWidth="2" />
      </svg>
      <div className="mt-[5px] ml-[36px] flex w-[116px] shrink-0 flex-col text-white">
        <div className="flex pl-[14px]">
          <Fit w={54} className="text-[24px] leading-[34px]">11:41</Fit>
          <Fit w={28} rtl className="ml-[7px] text-[22px] leading-[34px] font-bold">ص</Fit>
        </div>
        <Fit w={116} className="text-[23px] leading-[33px]">٢٠١١/١٠/١٣</Fit>
      </div>
      <div className="ml-[22px] h-[76px] w-[28px] shrink-0 border-2 border-[#b7c2d0] bg-gradient-to-br from-[#8494a8] via-[#5b6b80] to-[#8395aa]" />
    </div>
  );
}

export default function App() {
  return (
    <div className="relative flex h-[1536px] w-[2048px] flex-col overflow-hidden bg-white font-['Open_Sans','DejaVu_Sans',sans-serif]">
      <TitleBar />
      <MenuBar />
      <div className="flex h-[117px] shrink-0 flex-col bg-gradient-to-b from-[#f6f9fe] via-[#e3ecf8] via-50% to-[#e6eefa]">
        <FavoritesBar />
        <TabBar />
      </div>
      <div className="h-[5px] shrink-0 bg-[#f2f5fa]" />
      <div className="h-[4px] shrink-0 border-b-2 border-[#65676b] bg-[#9fa2a6]" />
      <div className="flex h-[1111px] shrink-0">
        <div className="w-[5px] shrink-0 border-r-2 border-[#6b6b6e] bg-[#a8a8ab]" />
        <ScrollBar />
        <ForumPage />
        <div className="w-[4px] shrink-0 border-l border-[#dcdcde] bg-[#f4f4f5]" />
      </div>
      <div className="h-[5px] shrink-0 border-y-2 border-[#f3f3f3] bg-[#86868a]" />
      <StatusBar />
      <TaskBar />
      <svg className="pointer-events-none absolute top-[1080px] left-[870px] h-[230px] w-[200px] drop-shadow-[3px_5px_3px_rgba(0,0,0,0.4)]" viewBox="0 0 200 230">
        <path d="M7 12L15 5L178 198L170 205Z" fill="#c00000" />
        <path d="M153 195L178 206L175 181" fill="none" stroke="#c00000" strokeWidth="9" strokeLinecap="round" strokeLinejoin="miter" />
        <path d="M172 208L186 217L182 200Z" fill="#c00000" />
      </svg>
    </div>
  );
}
